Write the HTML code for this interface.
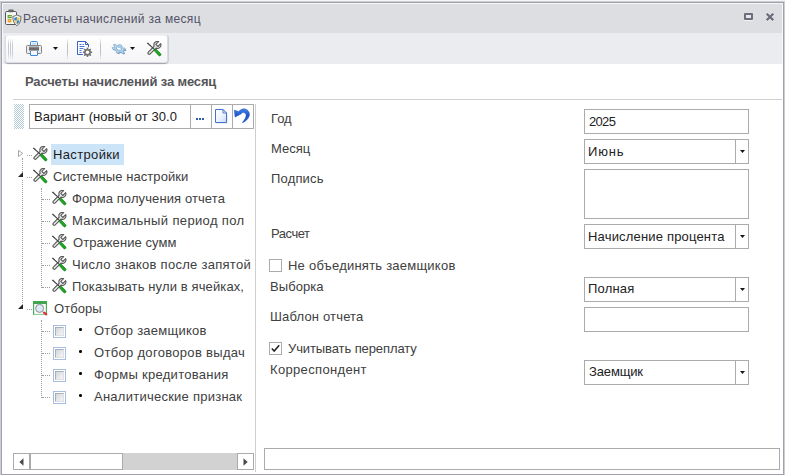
<!DOCTYPE html>
<html lang="ru">
<head>
<meta charset="utf-8">
<title>Расчеты начислений за месяц</title>
<style>
html,body{margin:0;padding:0;}
body{width:785px;height:475px;overflow:hidden;background:#fff;font-family:"Liberation Sans",sans-serif;font-size:13px;color:#404040;position:relative;}
.abs{position:absolute;}
.t{position:absolute;white-space:nowrap;line-height:16px;height:16px;}
#win{position:absolute;left:0;top:0;width:785px;height:475px;box-sizing:border-box;background:#fff;}
#titlebar{left:2px;top:3px;width:781px;height:30px;background:#dddee2;}
#band{left:3px;top:33px;width:779px;height:31px;background:#ebecef;}
#toolbar{left:5px;top:35px;width:163px;height:28px;box-sizing:border-box;border:1px solid #dcdde1;border-top-color:#f2f2f4;border-radius:3px;background:linear-gradient(#ffffff,#f5f5f8);box-shadow:0 1px 1px rgba(110,112,128,.6),1px 0 0 rgba(110,112,128,.18);}
.sep{position:absolute;top:38px;width:1px;height:22px;background:linear-gradient(rgba(190,191,200,0),#bfc0c8 30%,#bfc0c8 70%,rgba(190,191,200,0));}
.box{position:absolute;box-sizing:border-box;border:1px solid #ababab;background:#fff;}
.dd{position:absolute;top:0;right:12px;width:1px;height:100%;background:#ababab;}
.arr{position:absolute;width:5px;height:3px;background:#15151d;clip-path:polygon(0 0,100% 0,50% 100%);}
.hd{position:absolute;height:1px;border-top:1px dotted #9c9c9c;}
.vd{position:absolute;width:1px;border-left:1px dotted #9c9c9c;}
.cb{position:absolute;width:13px;height:13px;box-sizing:border-box;border:1px solid #a9bde0;background:#fff;}
.cb i{position:absolute;left:1px;top:1px;width:9px;height:9px;background:linear-gradient(135deg,#d4d6da,#f6f6f7);border:1px solid;border-color:#a9b0bc #dcdfe4 #dcdfe4 #a9b0bc;box-sizing:border-box;}
.bul{position:absolute;width:3px;height:3px;border-radius:1.2px;background:#0c0c0c;}
.cb2{position:absolute;width:13px;height:13px;box-sizing:border-box;border:1px solid #ababab;background:#fff;}
/*FIT-START*/
#title{left:23px;top:11px;letter-spacing:0.33px}
#head{left:25px;top:74px;letter-spacing:-0.15px}
#variant{left:34px;top:109px;letter-spacing:0.04px}
#t1{left:53px;top:147px;letter-spacing:0.35px}
#t2{left:53px;top:169px;letter-spacing:0.07px}
#t3{left:72px;top:191px;letter-spacing:0.10px}
#t4{left:72px;top:213px;letter-spacing:0.36px}
#t5{left:73px;top:235px;letter-spacing:0.08px}
#t6{left:72px;top:257px;letter-spacing:0.28px}
#t7{left:72px;top:279px;letter-spacing:0.12px}
#t8{left:54px;top:301px;letter-spacing:0.08px}
#t9{left:94px;top:323px;letter-spacing:0.26px}
#t10{left:94px;top:345px;letter-spacing:0.31px}
#t11{left:94px;top:367px;letter-spacing:0.29px}
#t12{left:94px;top:389px;letter-spacing:0.25px}
#l1{left:271px;top:111px;letter-spacing:0.00px}
#l2{left:271px;top:141px;letter-spacing:-0.01px}
#l3{left:271px;top:171px;letter-spacing:0.17px}
#l4{left:271px;top:226px;letter-spacing:-0.48px}
#l5{left:288px;top:258px;letter-spacing:0.23px}
#l6{left:270px;top:279px;letter-spacing:0.07px}
#l7{left:270px;top:309px;letter-spacing:0.17px}
#l8{left:288px;top:341px;letter-spacing:-0.10px}
#l9{left:270px;top:362px;letter-spacing:0.34px}
#v1{left:589px;top:114px;letter-spacing:-0.67px}
#v2{left:588px;top:144px;letter-spacing:0.86px}
#v3{left:588px;top:229px;letter-spacing:0.18px}
#v4{left:588px;top:281px;letter-spacing:0.20px}
#v5{left:589px;top:364px;letter-spacing:-0.14px}
/*FIT-END*/
</style>
</head>
<body>
<div id="win">
  <!-- window frame -->
  <div class="abs" style="left:0;top:0;width:785px;height:1px;background:#f6f6f7;"></div>
  <div class="abs" style="left:0;top:1px;width:785px;height:475px;box-sizing:border-box;border:1px solid #cdced3;"></div>
  <div class="abs" style="left:1px;top:2px;width:783px;height:473px;box-sizing:border-box;border:1px solid #9fa1ab;"></div>
  <div class="abs" id="titlebar"></div>
  <div class="abs" style="left:2px;top:3px;width:781px;height:1px;background:#f5f5f7;"></div>
  <div class="abs" style="left:2px;top:3px;width:1px;height:61px;background:#f7f7f9;"></div>
  <div class="abs" style="left:782px;top:3px;width:1px;height:61px;background:#f7f7f9;"></div>
  <div class="abs" id="band"></div>

  <!-- title icon -->
  <svg class="abs" style="left:4px;top:8px" width="19" height="19" viewBox="0 0 19 19">
    <rect x="1.5" y="3.5" width="11" height="13" rx="1.2" fill="#f7f7f7" stroke="#555" stroke-width="1"/>
    <rect x="4.3" y="1.6" width="5.4" height="2.6" rx="1" fill="#666"/>
    <rect x="3.6" y="7" width="4.2" height="3.2" fill="#5aa42c"/>
    <rect x="4.6" y="8.2" width="3.2" height="0.8" fill="#cfe6b8"/>
    <rect x="3.6" y="11" width="3.8" height="3.4" fill="#e3a32e"/>
    <rect x="4.9" y="12.2" width="1.2" height="1" fill="#f6d58e"/>
    <path d="M12.9 6.8 C11.4 7.9 10.1 8.2 8.9 8.3 C8.7 12.6 10.1 15.9 12.9 17.7 C15.7 15.9 17.1 12.6 16.9 8.3 C15.7 8.2 14.4 7.9 12.9 6.8Z" fill="#fcfcfc" stroke="#666" stroke-width="1"/>
    <path d="M12.9 8.8 L12.9 12.4 L10.3 12.4 C10.2 11.4 10.2 10.5 10.3 9.8 C11.2 9.7 12.1 9.4 12.9 8.8Z" fill="#1f84dc"/>
    <path d="M12.9 8.8 L12.9 12.4 L15.5 12.4 C15.6 11.4 15.6 10.5 15.5 9.8 C14.6 9.7 13.7 9.4 12.9 8.8Z" fill="#f7c64a"/>
    <path d="M12.9 12.4 L10.3 12.4 C10.6 13.9 11.5 15.2 12.9 16.1Z" fill="#f7c64a"/>
    <path d="M12.9 12.4 L15.5 12.4 C15.2 13.9 14.3 15.2 12.9 16.1Z" fill="#1f84dc"/>
  </svg>
  <div class="t" id="title" style="font-size:12px;color:#535366;">Расчеты начислений за месяц</div>

  <!-- window buttons -->
  <div class="abs" style="left:744px;top:13px;width:9px;height:7px;box-sizing:border-box;border:2px solid #6c6d7b;border-radius:1px;background:#e7e8eb;box-shadow:0 1px 0 rgba(255,255,255,.55);"></div>
  <svg class="abs" style="left:765px;top:12px" width="10" height="11" viewBox="0 0 10 11"><path d="M1.7 2.7 L8.3 9.3 M8.3 2.7 L1.7 9.3" stroke="#eceef1" stroke-width="2" fill="none"/><path d="M1.7 1.7 L8.3 8.3 M8.3 1.7 L1.7 8.3" stroke="#6c6d7b" stroke-width="2.3" fill="none"/></svg>

  <!-- toolbar -->
  <div class="abs" id="toolbar"></div>
  <div class="abs" style="left:8px;top:38px;width:1px;height:22px;background:linear-gradient(rgba(196,197,208,0),#c9cad4 30%,#c9cad4 70%,rgba(196,197,208,0));"></div>
  <div class="abs" style="left:10px;top:38px;width:1px;height:22px;background:linear-gradient(rgba(196,197,208,0),#c9cad4 30%,#c9cad4 70%,rgba(196,197,208,0));"></div>
  <div class="abs" style="left:12px;top:38px;width:1px;height:22px;background:linear-gradient(rgba(196,197,208,0),#c9cad4 30%,#c9cad4 70%,rgba(196,197,208,0));"></div>
  <!-- printer -->
  <svg class="abs" style="left:25px;top:40px" width="18" height="17" viewBox="0 0 18 17">
    <rect x="5.5" y="1.5" width="7" height="14" rx="1" fill="#eaf4fd" stroke="#3d8bd8"/>
    <rect x="7" y="3" width="4" height="1.5" fill="#b8d8f5"/>
    <rect x="1.5" y="5.5" width="15" height="8" rx="1" fill="#ececed" stroke="#858585"/>
    <rect x="4" y="6.5" width="10" height="4.2" fill="#858585"/>
    <rect x="4" y="8.4" width="10" height="1.2" fill="#5e5e5e"/>
    <rect x="5.5" y="11" width="7" height="4.5" fill="#f3f9ff"/>
    <path d="M5.5 11 V15 Q5.5 15.5 6 15.5 H12 Q12.5 15.5 12.5 15 V11" fill="none" stroke="#3d8bd8"/>
  </svg>
  <div class="arr" style="left:53px;top:47px;"></div>
  <div class="sep" style="left:67px;"></div>
  <!-- doc gear -->
  <svg class="abs" style="left:76px;top:40px" width="18" height="18" viewBox="0 0 18 18">
    <path d="M1.5 1.5 H9.5 L12.5 4.5 V14.5 H1.5Z" fill="#fff" stroke="#3563c9"/>
    <path d="M9.5 1.5 V4.5 H12.5" fill="none" stroke="#3563c9"/>
    <path d="M3.5 4.5 H5.5 M6.5 4.5 H8 M3.5 6.5 H8.5 M3.5 8.5 H7.5 M3.5 10.5 H5.5 M3.5 12.5 H5.5" stroke="#4a78d8" stroke-width="1"/>
    <circle cx="11.5" cy="12.3" r="5.2" fill="#fff"/>
    <g fill="#737373">
      <circle cx="11.5" cy="12.3" r="3.4"/>
      <rect x="10.7" y="7.6" width="1.6" height="9.4"/>
      <rect x="10.7" y="7.6" width="1.6" height="9.4" transform="rotate(45 11.5 12.3)"/>
      <rect x="10.7" y="7.6" width="1.6" height="9.4" transform="rotate(90 11.5 12.3)"/>
      <rect x="10.7" y="7.6" width="1.6" height="9.4" transform="rotate(135 11.5 12.3)"/>
    </g>
    <circle cx="11.5" cy="12.3" r="1.7" fill="#fff"/>
  </svg>
  <div class="sep" style="left:100px;"></div>
  <!-- gears -->
  <svg class="abs" style="left:111px;top:42px" width="16" height="14" viewBox="0 0 16 14">
    <defs><g id="gr"><circle r="4.9"/><rect x="-1.4" y="-7.1" width="2.8" height="14.2"/><rect x="-1.4" y="-7.1" width="2.8" height="14.2" transform="rotate(60)"/><rect x="-1.4" y="-7.1" width="2.8" height="14.2" transform="rotate(120)"/></g></defs>
    <g transform="translate(8.5 7.7) rotate(22) scale(1 0.6)"><use href="#gr" fill="#6d90b6"/></g>
    <g transform="translate(7.9 6.7) rotate(22) scale(1 0.6)">
      <use href="#gr" fill="#b0d6f1" stroke="#84a9cd" stroke-width="0.7"/>
      <circle r="4.4" fill="#b0d6f1"/>
      <ellipse rx="2.7" ry="2.5" fill="#fcfcfe" stroke="#7499bf" stroke-width="0.8"/>
    </g>
  </svg>
  <div class="arr" style="left:130px;top:47px;"></div>
  <!-- tools -->
  <svg class="abs" style="left:146px;top:41px" width="16" height="16" viewBox="0 0 16 16"><use href="#tools"/></svg>

  <!-- heading -->
  <div class="t" id="head" style="font-weight:bold;color:#555558;">Расчеты начислений за месяц</div>
  <div class="abs" style="left:13px;top:99px;width:769px;height:1px;background:#d0d0d0;"></div>

  <!-- left panel -->
  <svg class="abs" style="left:14px;top:104px" width="10" height="25" viewBox="0 0 10 25">
    <defs><pattern id="dots" width="2" height="2" patternUnits="userSpaceOnUse"><rect width="2" height="2" fill="#ffffff"/><rect width="1" height="1" fill="#b4cbdc"/><rect x="1" y="1" width="1" height="1" fill="#b4cbdc"/></pattern></defs>
    <rect width="10" height="25" fill="url(#dots)"/>
  </svg>
  <div class="box" style="left:29px;top:104px;width:225px;height:25px;"></div>
  <div class="abs" style="left:190px;top:104px;width:1px;height:25px;background:#ababab;"></div>
  <div class="abs" style="left:211px;top:104px;width:1px;height:25px;background:#ababab;"></div>
  <div class="abs" style="left:232px;top:104px;width:1px;height:25px;background:#ababab;"></div>
  <div class="t" id="variant" style="color:#222;">Вариант (новый от 30.0</div>
  <div class="abs" style="left:196px;top:118px;width:2px;height:2px;background:#2f5fa8;box-shadow:3px 0 0 #2f5fa8,6px 0 0 #2f5fa8;"></div>
  <!-- new doc icon -->
  <svg class="abs" style="left:214px;top:108px" width="16" height="17" viewBox="0 0 16 17">
    <defs><linearGradient id="dg" x1="0" y1="0" x2="1" y2="1"><stop offset="0" stop-color="#ffffff"/><stop offset="0.5" stop-color="#eef5fd"/><stop offset="1" stop-color="#c4dcf6"/></linearGradient></defs>
    <path d="M2.5 2.5 H9.8 L13.5 6 V15.5 H2.5Z" fill="#c9ccd4" opacity="0.7"/>
    <path d="M1.5 1.5 H9 L12.5 5 V14.5 H1.5Z" fill="url(#dg)" stroke="#4673cf"/>
    <path d="M9 1.5 V5 H12.5Z" fill="#f4f8fe" stroke="#4673cf" stroke-linejoin="round" stroke-width="0.9"/>
  </svg>
  <!-- undo icon -->
  <svg class="abs" style="left:233px;top:107px" width="19" height="19" viewBox="0 0 19 19">
    <defs><linearGradient id="ug" x1="0" y1="0" x2="0" y2="1"><stop offset="0" stop-color="#3f86e8"/><stop offset="0.45" stop-color="#1f55cf"/><stop offset="1" stop-color="#2a5fd6"/></linearGradient></defs>
    <path d="M1.3 3.2 L2.1 10.1 L8 6.9 C9 5.7 10 5.3 10.8 5.5 C12.4 5.9 13.3 7.2 13.1 8.6 C12.9 10.6 12 12.2 9.3 15.8 C12.6 14.6 15.4 11.7 16.3 8.7 C17.1 5.6 15 2.4 11.7 1.9 C9.6 1.6 7.6 2.6 5.8 4.5Z" fill="url(#ug)" stroke="#1d4db8" stroke-width="0.5" stroke-linejoin="round"/>
  </svg>
  <!-- splitter -->
  <div class="abs" style="left:255px;top:104px;width:1px;height:368px;background:#cfcfcf;"></div>

  <!-- tree -->
  <svg width="0" height="0" style="position:absolute">
    <defs>
      <g id="tools">
        <path d="M12.63 0.62 L9.81 3.44 L11.86 5.49 L14.68 2.67 A3.5 3.5 0 0 1 10.02 7.12 L4.19 12.95 A1.3 1.3 0 0 1 2.35 11.11 L8.18 5.28 A3.5 3.5 0 0 1 12.63 0.62 Z" fill="#ededed" stroke="#5c5c5c" stroke-width="1.15" stroke-linejoin="round"/>
        <path d="M0.8 2.3 L1.9 1.5 L9.6 8.9 L8.9 9.6Z" fill="#3c3c3c"/>
        <path d="M8.1 9.5 L9.8 7.8 L14.5 12.5 C15.2 13.2 15.1 14 14.6 14.5 C14.1 15 13.3 15.1 12.6 14.4Z" fill="#20a523" stroke="#138019" stroke-width="0.7" stroke-linejoin="round"/>
      </g>
    </defs>
  </svg>
  <div class="abs" style="left:51px;top:144px;width:73px;height:21px;background:#cce4f7;"></div>

  <div class="vd" style="left:22px;top:158px;height:14px;"></div>
  <div class="vd" style="left:22px;top:180px;height:123px;"></div>
  <div class="vd" style="left:41px;top:188px;height:100px;"></div>
  <div class="vd" style="left:41px;top:320px;height:78px;"></div>
  <div class="hd" style="left:27px;top:155px;width:5px;"></div>
  <div class="hd" style="left:27px;top:177px;width:5px;"></div>
  <div class="hd" style="left:27px;top:309px;width:5px;"></div>
  <div class="hd" style="left:42px;top:199px;width:8px;"></div>
  <div class="hd" style="left:42px;top:221px;width:8px;"></div>
  <div class="hd" style="left:42px;top:243px;width:8px;"></div>
  <div class="hd" style="left:42px;top:265px;width:8px;"></div>
  <div class="hd" style="left:42px;top:287px;width:8px;"></div>
  <div class="hd" style="left:42px;top:331px;width:8px;"></div>
  <div class="hd" style="left:42px;top:353px;width:8px;"></div>
  <div class="hd" style="left:42px;top:375px;width:8px;"></div>
  <div class="hd" style="left:42px;top:397px;width:8px;"></div>

  <!-- expanders -->
  <svg class="abs" style="left:18px;top:150px" width="6" height="8" viewBox="0 0 6 8"><path d="M0.5 0.4 L4.7 3.4 L0.5 6.5Z" fill="#fff" stroke="#9d9d9d" stroke-width="0.9"/></svg>
  <svg class="abs" style="left:18px;top:172px" width="5" height="5" viewBox="0 0 5 5"><path d="M5 0 V5 H0Z" fill="#262626"/></svg>
  <svg class="abs" style="left:18px;top:304px" width="5" height="5" viewBox="0 0 5 5"><path d="M5 0 V5 H0Z" fill="#262626"/></svg>

  <svg class="abs" style="left:32px;top:146px" width="16" height="16" viewBox="0 0 16 16"><use href="#tools"/></svg>
  <svg class="abs" style="left:32px;top:168px" width="16" height="16" viewBox="0 0 16 16"><use href="#tools"/></svg>
  <svg class="abs" style="left:51px;top:190px" width="16" height="16" viewBox="0 0 16 16"><use href="#tools"/></svg>
  <svg class="abs" style="left:51px;top:212px" width="16" height="16" viewBox="0 0 16 16"><use href="#tools"/></svg>
  <svg class="abs" style="left:51px;top:234px" width="16" height="16" viewBox="0 0 16 16"><use href="#tools"/></svg>
  <svg class="abs" style="left:51px;top:256px" width="16" height="16" viewBox="0 0 16 16"><use href="#tools"/></svg>
  <svg class="abs" style="left:51px;top:278px" width="16" height="16" viewBox="0 0 16 16"><use href="#tools"/></svg>
  <!-- filter icon -->
  <svg class="abs" style="left:32px;top:300px" width="16" height="16" viewBox="0 0 16 16">
    <rect x="1.5" y="1.5" width="13" height="13" fill="#fff" stroke="#4aad58"/>
    <rect x="2.5" y="4" width="11" height="10" fill="none" stroke="#def1df"/>
    <rect x="1" y="1" width="14" height="3" fill="#3ea64e"/>
    <circle cx="7.6" cy="8.4" r="4" fill="#dceaf8" stroke="#8a8c90" stroke-width="1"/>
    <path d="M12 12.6 L14.2 14.2" stroke="#d9363a" stroke-width="2.3" stroke-linecap="round"/>
  </svg>

  <div class="t tr" id="t1" style="color:#1c1c1c;">Настройки</div>
  <div class="t tr" id="t2">Системные настройки</div>
  <div class="t tr" id="t3">Форма получения отчета</div>
  <div class="t tr" id="t4">Максимальный период пол</div>
  <div class="t tr" id="t5">Отражение сумм</div>
  <div class="t tr" id="t6">Число знаков после запятой</div>
  <div class="t tr" id="t7">Показывать нули в ячейках,</div>
  <div class="t tr" id="t8">Отборы</div>
  <div class="cb" style="left:53px;top:325px;"><i></i></div>
  <div class="cb" style="left:53px;top:347px;"><i></i></div>
  <div class="cb" style="left:53px;top:369px;"><i></i></div>
  <div class="cb" style="left:53px;top:391px;"><i></i></div>
  <div class="bul" style="left:79px;top:328px;"></div>
  <div class="bul" style="left:79px;top:350px;"></div>
  <div class="bul" style="left:79px;top:372px;"></div>
  <div class="bul" style="left:79px;top:394px;"></div>
  <div class="t tr" id="t9">Отбор заемщиков</div>
  <div class="t tr" id="t10">Отбор договоров выдач</div>
  <div class="t tr" id="t11">Формы кредитования</div>
  <div class="t tr" id="t12">Аналитические признак</div>

  <!-- scrollbar -->
  <div class="abs" style="left:13px;top:453px;width:241px;height:17px;background:#d2d2d2;"></div>
  <div class="box" style="left:13px;top:453px;width:17px;height:17px;"></div>
  <div class="box" style="left:30px;top:453px;width:93px;height:17px;"></div>
  <div class="box" style="left:237px;top:453px;width:17px;height:17px;"></div>
  <svg class="abs" style="left:19px;top:458px" width="5" height="8" viewBox="0 0 5 8"><path d="M4.5 0.3 V7.7 L0.3 4Z" fill="#4a4a4a"/></svg>
  <svg class="abs" style="left:243px;top:458px" width="5" height="8" viewBox="0 0 5 8"><path d="M0.5 0.3 V7.7 L4.7 4Z" fill="#4a4a4a"/></svg>

  <!-- right panel -->
  <div class="t lb" id="l1">Год</div>
  <div class="t lb" id="l2">Месяц</div>
  <div class="t lb" id="l3">Подпись</div>
  <div class="t lb" id="l4">Расчет</div>
  <div class="t lb" id="l5">Не объединять заемщиков</div>
  <div class="t lb" id="l6">Выборка</div>
  <div class="t lb" id="l7">Шаблон отчета</div>
  <div class="t lb" id="l8">Учитывать переплату</div>
  <div class="t lb" id="l9">Корреспондент</div>

  <div class="cb2" style="left:269px;top:259px;"></div>
  <div class="cb2" style="left:269px;top:342px;"></div>
  <svg class="abs" style="left:271px;top:344px" width="9" height="9" viewBox="0 0 9 9"><path d="M0.8 4.4 L3.2 7 L8.2 1.2" fill="none" stroke="#222" stroke-width="1.5"/></svg>

  <div class="box" style="left:584px;top:109px;width:165px;height:25px;"></div>
  <div class="box" style="left:584px;top:139px;width:165px;height:25px;"><span class="dd"></span></div>
  <div class="box" style="left:584px;top:169px;width:165px;height:50px;"></div>
  <div class="box" style="left:584px;top:224px;width:165px;height:25px;"><span class="dd"></span></div>
  <div class="box" style="left:584px;top:277px;width:165px;height:25px;"><span class="dd"></span></div>
  <div class="box" style="left:584px;top:307px;width:165px;height:25px;"></div>
  <div class="box" style="left:584px;top:360px;width:165px;height:25px;"><span class="dd"></span></div>
  <div class="arr" style="left:740px;top:150px;"></div>
  <div class="arr" style="left:740px;top:235px;"></div>
  <div class="arr" style="left:740px;top:288px;"></div>
  <div class="arr" style="left:740px;top:371px;"></div>
  <div class="t fv" id="v1" style="color:#222;">2025</div>
  <div class="t fv" id="v2" style="color:#222;">Июнь</div>
  <div class="t fv" id="v3" style="color:#222;">Начисление процента</div>
  <div class="t fv" id="v4" style="color:#222;">Полная</div>
  <div class="t fv" id="v5" style="color:#222;">Заемщик</div>

  <div class="box" style="left:264px;top:448px;width:516px;height:22px;"></div>
</div>
</body>
</html>
